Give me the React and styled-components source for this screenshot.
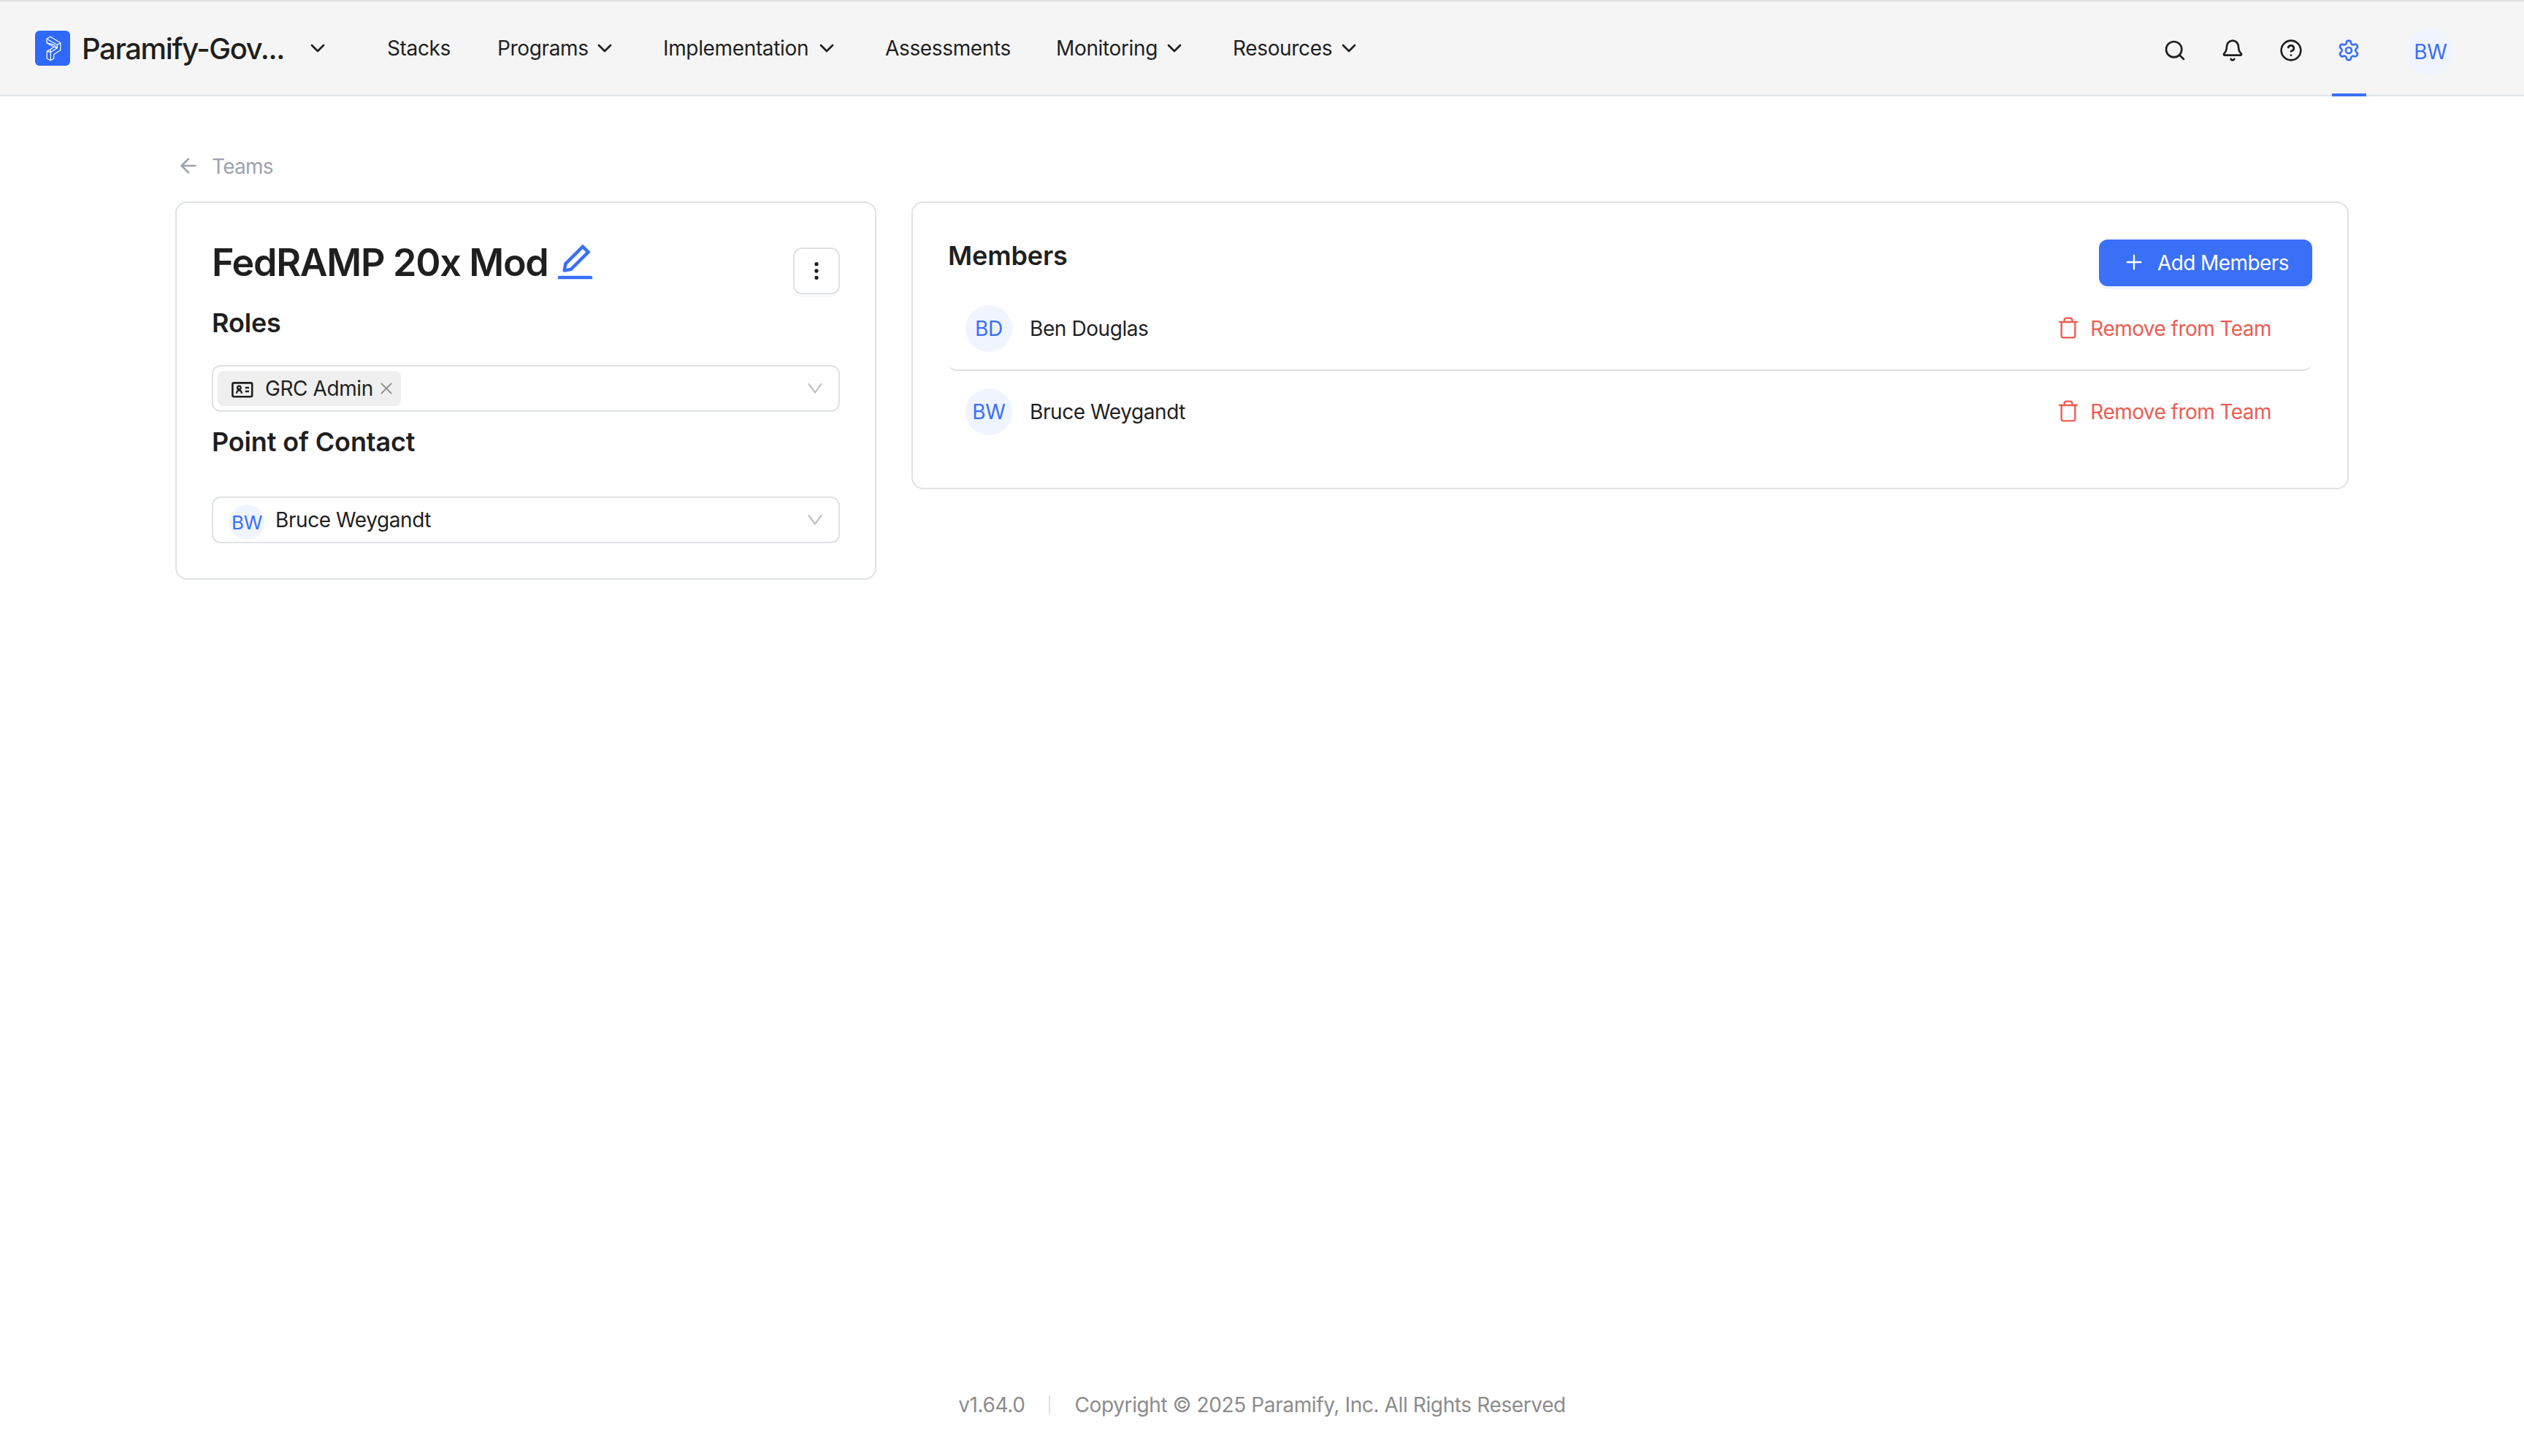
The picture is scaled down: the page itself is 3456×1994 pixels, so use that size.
import styled, { createGlobalStyle } from "styled-components";
import {
  ArrowLeft,
  Bell,
  ChevronDown,
  CircleHelp,
  EllipsisVertical,
  Plus,
  Search,
  Settings,
  Trash,
} from "lucide-react";

const NAV_ITEMS = [
  { label: "Stacks", width: 87 },
  { label: "Programs", width: 123, menu: true },
  { label: "Implementation", width: 200, menu: true },
  { label: "Assessments", width: 170 },
  { label: "Monitoring", width: 138, menu: true },
  { label: "Resources", width: 135, menu: true },
];

const MEMBERS = [
  { initials: "BD", name: "Ben Douglas" },
  { initials: "BW", name: "Bruce Weygandt" },
];

const headerIcon = { size: 32, strokeWidth: 2 };
const icon = { size: 32, strokeWidth: 1.75 };

const LogoMark = () => (
  <svg width="48" height="48" viewBox="0 0 48 48" fill="none" stroke="#fff" strokeWidth="1.2" strokeLinejoin="round">
    <path d="M16 11.3 21 8.2l13.8 8.6v10L25.8 32.5v5.6L21 40.8l-4.8-2.7V28.3l10-5.8L16 16.7z" />
    <path d="m16 11.3 14.4 8.3 4.4-2.8M30.4 19.6v4.2l-9 5.6v11.4M16.2 28.3l5.2 1.1M26.2 22.5l4.2 1.3M21.2 25.4v4M16 16.7l10.2 2.9 4.2 4.2" />
  </svg>
);

const EditIcon = () => (
  <svg width="53" height="53" viewBox="64 64 896 896" fill="#3a6ff7">
    <path d="M257.7 752c2 0 4-.2 6-.5L431.9 722c2-.4 3.9-1.3 5.3-2.8l423.9-423.9a9.96 9.96 0 000-14.1L694.9 114.9c-1.9-1.9-4.4-2.9-7.1-2.9s-5.2 1-7.1 2.9L256.8 538.8c-1.5 1.5-2.4 3.3-2.8 5.3l-29.5 168.2a33.5 33.5 0 009.4 29.8c6.6 6.4 14.9 9.9 23.8 9.9zm67.4-174.4L687.8 215l73.3 73.3-362.7 362.6-88.9 15.7 15.6-89zM880 836H144c-17.7 0-32 14.3-32 32v36c0 4.4 3.6 8 8 8h784c4.4 0 8-3.6 8-8v-36c0-17.7-14.3-32-32-32z" />
  </svg>
);

const SelectArrow = () => (
  <svg width="24" height="24" viewBox="64 64 896 896" fill="#bfbfbf">
    <path d="M884 256h-75c-5.1 0-9.9 2.5-12.9 6.6L512 654.2 227.9 262.6c-3-4.1-7.8-6.6-12.9-6.6h-75c-6.5 0-10.3 7.4-6.5 12.7l352.6 486.1c12.8 17.6 39 17.6 51.7 0l352.6-486.1c3.9-5.3.1-12.7-6.4-12.7z" />
  </svg>
);

const CloseIcon = () => (
  <svg width="20" height="20" viewBox="0 0 20 20" stroke="#8c8c8c" strokeWidth="1.8">
    <path d="m2.9 2.9 14.2 14.2M17.1 2.9 2.9 17.1" />
  </svg>
);

const RoleIcon = () => (
  <svg width="30" height="22" viewBox="0 0 30 22" fill="none" stroke="#1f1f1f" strokeWidth="2.3">
    <rect x="1.4" y="1.4" width="26.8" height="18.8" rx="2" strokeWidth="2.6" />
    <circle cx="10.4" cy="7.9" r="2.3" />
    <path d="M6.9 15.8c.3-2.8 1.6-4.2 3.5-4.2s3.3 1.4 3.6 4.2M18.8 8h5.2M18.8 13h5.2" />
  </svg>
);

const App = () => {
  return (
    <Page>
      <GlobalStyle />
      <Header>
        <Logo>
          <LogoMark />
        </Logo>
        <Workspace>Paramify-Gov...</Workspace>
        <WorkspaceArrow>
          <ChevronDown {...headerIcon} />
        </WorkspaceArrow>
        <Nav>
          {NAV_ITEMS.map((item) => (
            <NavItem key={item.label}>
              <NavLabel $width={item.width}>{item.label}</NavLabel>
              {item.menu && <ChevronDown {...headerIcon} />}
            </NavItem>
          ))}
        </Nav>
        <Tools>
          <Tool><Search {...headerIcon} /></Tool>
          <Tool><Bell {...headerIcon} /></Tool>
          <Tool><CircleHelp {...headerIcon} /></Tool>
          <Tool $active><Settings {...headerIcon} /></Tool>
        </Tools>
        <UserAvatar>BW</UserAvatar>
      </Header>

      <Main>
        <BackLink>
          <ArrowLeft {...headerIcon} />
          Teams
        </BackLink>
        <Columns>
          <Card>
            <TitleRow>
              <Title>FedRAMP 20x Mod</Title>
              <EditIcon />
              <MenuButton>
                <EllipsisVertical {...headerIcon} />
              </MenuButton>
            </TitleRow>
            <SectionTitle>Roles</SectionTitle>
            <Select $gap={34}>
              <Tag>
                <RoleIcon />
                <TagLabel>GRC Admin</TagLabel>
                <CloseIcon />
              </Tag>
              <SelectArrow />
            </Select>
            <ContactHeading>Point of Contact</ContactHeading>
            <Select $gap={51}>
              <Contact>
                <SmallAvatar>BW</SmallAvatar>
                Bruce Weygandt
              </Contact>
              <SelectArrow />
            </Select>
          </Card>

          <Card>
            <MembersHeader>
              <SectionTitle>Members</SectionTitle>
              <AddButton>
                <Plus {...icon} />
                Add Members
              </AddButton>
            </MembersHeader>
            {MEMBERS.map((member) => (
              <MemberRow key={member.initials}>
                <Avatar>{member.initials}</Avatar>
                <MemberName>{member.name}</MemberName>
                <RemoveButton>
                  <Trash {...icon} />
                  Remove from Team
                </RemoveButton>
              </MemberRow>
            ))}
          </Card>
        </Columns>
      </Main>

      <Footer>
        <span>v1.64.0</span>
        <Divider />
        <span>Copyright © 2025 Paramify, Inc. All Rights Reserved</span>
      </Footer>
    </Page>
  );
};

export default App;


const GlobalStyle = createGlobalStyle`
  * {
    box-sizing: border-box;
  }

  body {
    margin: 0;
    background: #fff;
  }

  svg {
    display: block;
    flex: none;
  }
`;

const Page = styled.div`
  display: flex;
  flex-direction: column;
  height: 1994px;
  color: #1f1f1f;
  font-family: Inter, "Liberation Sans", sans-serif;
  font-size: 28px;
  line-height: 44px;
  letter-spacing: -0.42px;
  white-space: nowrap;
`;

const Header = styled.header`
  display: flex;
  align-items: center;
  height: 132px;
  padding: 0 96px 0 48px;
  background: #f5f5f5;
  border-top: 2px solid #e0e0e0;
  border-bottom: 2px solid #dee2e6;
`;

const Logo = styled.div`
  width: 48px;
  height: 48px;
  border-radius: 6px;
  background: #2f69f8;
`;

const Workspace = styled.div`
  width: 277px;
  margin-left: 16px;
  font-size: 40px;
  font-weight: 500;
  line-height: 45px;
  letter-spacing: -1.4px;
`;

const WorkspaceArrow = styled.div`
  margin-left: 30px;
`;

const Nav = styled.nav`
  display: flex;
  gap: 64px;
  margin-left: 79px;
`;

const NavItem = styled.a`
  display: flex;
  align-items: center;
  gap: 8px;
`;

const NavLabel = styled.span`
  width: ${(props) => props.$width}px;
  letter-spacing: -0.35px;
`;

const Tools = styled.div`
  display: flex;
  align-self: stretch;
  gap: 32px;
  margin: 0 56px -2px auto;
`;

const Tool = styled.div`
  display: flex;
  justify-content: center;
  width: 47.5px;
  padding-top: 51px;
  color: ${(props) => (props.$active ? "#3a6ff7" : "inherit")};
  border-bottom: 4px solid ${(props) => (props.$active ? "#3a6ff7" : "transparent")};
`;

const Avatar = styled.div`
  flex: none;
  width: 64px;
  height: 64px;
  border-radius: 50%;
  background: #eff4ff;
  color: #3a6ff7;
  line-height: 64px;
  letter-spacing: -0.2px;
  text-align: center;
`;

const UserAvatar = styled(Avatar)`
  margin-top: 10px;
`;

const SmallAvatar = styled(Avatar)`
  width: 48px;
  height: 48px;
  margin-top: 6px;
  font-size: 26px;
  line-height: 49px;
`;

const Main = styled.main`
  padding: 80px 240px 0;
`;

const BackLink = styled.a`
  display: flex;
  align-items: center;
  gap: 16px;
  height: 32px;
  margin: 0 0 32px 2px;
  color: #9ca3af;
  letter-spacing: -0.75px;

  svg {
    margin-top: -2px;
  }
`;

const Columns = styled.div`
  display: grid;
  grid-template-columns: 960px 1fr;
  align-items: start;
  gap: 48px;
`;

const Card = styled.section`
  padding: 48px;
  border: 2px solid #dee2e6;
  border-radius: 16px;
`;

const TitleRow = styled.div`
  display: flex;
  height: 92px;

  > svg {
    margin: 6px 0 0 11px;
  }
`;

const Title = styled.h1`
  margin: 0;
  font-size: 52px;
  font-weight: 600;
  line-height: 68px;
  letter-spacing: -1.3px;
`;

const MenuButton = styled.div`
  display: flex;
  align-items: center;
  justify-content: center;
  width: 64px;
  height: 64px;
  margin: 13px 0 0 auto;
  border: 2px solid #dee2e6;
  border-radius: 12px;
  box-shadow: 0 4px 0 rgba(0, 0, 0, 0.02);
`;

const SectionTitle = styled.h2`
  margin: 0;
  font-size: 36px;
  font-weight: 600;
  line-height: 48px;
  letter-spacing: -0.15px;
`;

const ContactHeading = styled(SectionTitle)`
  margin-top: 17px;
`;

const Select = styled.div`
  display: flex;
  align-items: center;
  justify-content: space-between;
  height: 64px;
  margin-top: ${(props) => props.$gap}px;
  padding: 0 20px 0 6px;
  border: 2px solid #dee2e6;
  border-radius: 12px;
`;

const Tag = styled.div`
  display: flex;
  align-items: center;
  width: 251px;
  height: 48px;
  padding: 0 10px 0 19px;
  border-radius: 8px;
  background: #efefef;

  svg:first-child {
    margin-top: 4px;
  }
`;

const TagLabel = styled.span`
  margin: 0 auto 0 16px;
`;

const Contact = styled.div`
  display: flex;
  align-items: center;
  gap: 15px;
  padding-left: 16px;
`;

const MembersHeader = styled.div`
  display: flex;
  justify-content: space-between;
  height: 68px;
`;

const AddButton = styled.div`
  display: flex;
  align-items: center;
  gap: 16px;
  width: 292px;
  height: 64px;
  margin-top: 2px;
  padding-left: 32px;
  border-radius: 12px;
  background: #3a6ff7;
  box-shadow: 0 4px 0 #eff4ff;
  color: #fff;
  letter-spacing: -0.6px;

  svg {
    margin-top: -2px;
  }
`;

const MemberRow = styled.div`
  display: flex;
  align-items: center;
  height: 112px;
  padding: 0 56px 0 24px;

  &:not(:last-child) {
    height: 114px;
    border-bottom: 2px solid #e0e0e0;
    border-radius: 12px;
  }
`;

const MemberName = styled.div`
  margin-left: 24px;
`;

const RemoveButton = styled.div`
  display: flex;
  align-items: center;
  gap: 14px;
  margin-left: auto;
  color: #ee5b52;
  letter-spacing: -0.55px;

  svg {
    margin-top: -2px;
  }
`;

const Footer = styled.footer`
  display: flex;
  align-items: center;
  justify-content: center;
  margin: auto 0 48px;
  color: #8c8c8c;
  letter-spacing: -0.38px;
`;

const Divider = styled.div`
  width: 2px;
  height: 26px;
  margin: 0 33px;
  background: #e3e3e3;
`;
